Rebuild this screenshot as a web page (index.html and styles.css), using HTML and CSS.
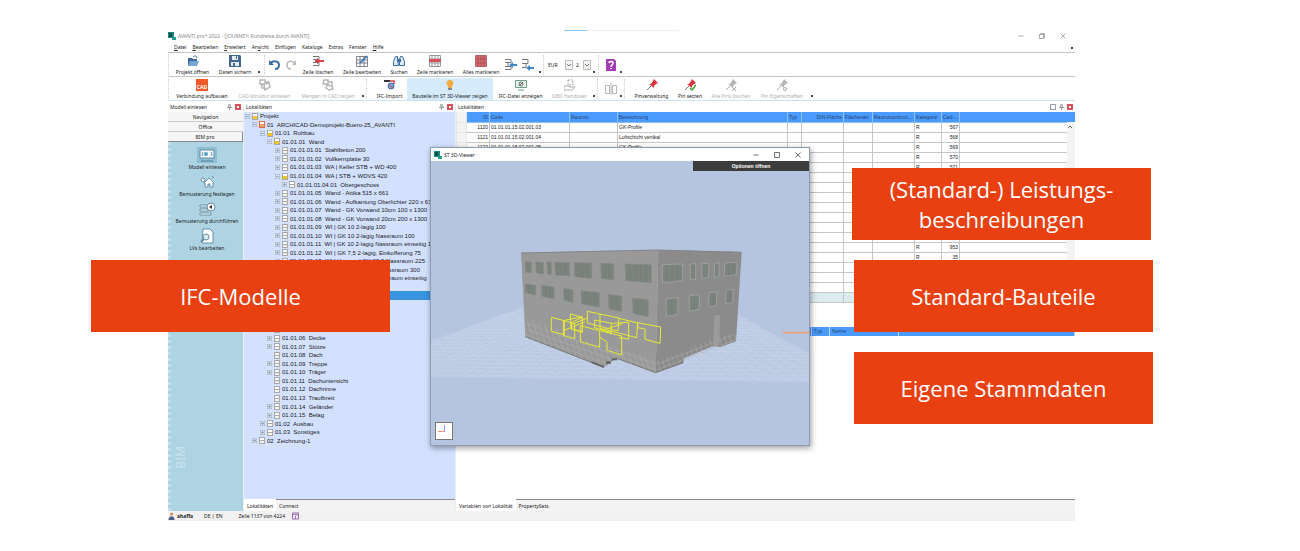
FILE: index.html
```html
<!DOCTYPE html>
<html lang="de">
<head>
  <meta charset="UTF-8">
  <meta name="viewport" content="width=device-width, initial-scale=1.0">
  <title>AVANTI pro+ 2022</title>
  <link rel="stylesheet" href="styles.css">
</head>
<body>
  <main class="stage">
    <div class="load-bar"></div>
    <div class="app">
      <header class="title-bar">
        <svg class="logo" viewBox="0 0 8 8"><path fill="#16897b" d="M0 0h6v6H0z"/><path fill="#0c4f4c" d="M1 1h3v4H1z"/><path fill="#22a08f" d="M4 5h4v3H4z"/></svg>
        <span>AVANTI pro+ 2022 - [JOURNEY: Rundreise durch AVANTI]</span>
        <div class="window-buttons">
          <button aria-label="Minimieren"><svg viewBox="0 0 6 6"><path d="M.5 3h5"/></svg></button>
          <button aria-label="Wiederherstellen"><svg viewBox="0 0 6 6"><path d="M.5 1.500h4v4h-4zM1.500 1.500v-1h4v4h-1"/></svg></button>
          <button aria-label="Schließen"><svg viewBox="0 0 6 6"><path d="M.5.5l5 5M5.500.5l-5 5"/></svg></button>
        </div>
      </header>
      <nav class="menu">
        <button><u>D</u>atei</button>
        <button><u>B</u>earbeiten</button>
        <button><u>E</u>rweitert</button>
        <button>An<u>s</u>icht</button>
        <button>Einfügen</button>
        <button>Kataloge</button>
        <button>Extras</button>
        <button>Fenster</button>
        <button><u>H</u>ilfe</button>
        <i class="more"></i>
      </nav>

      <div class="toolbar toolbar-main">
        <i class="grip"></i>
        <button class="tool"><svg viewBox="0 0 12 12"><path fill="#3e6b9d" d="M1 3h4l1 1h4v7H1z"/><path fill="#76a6d3" d="M3 6h9l-2 5H1z"/><path fill="none" stroke="#3e6b9d" d="M6 2c2-2 4-1 4 1"/></svg>Projekt öffnen</button>
        <button class="tool"><svg viewBox="0 0 12 12"><path fill="#45688f" d="M0 0h11l1 1v11H0z"/><path fill="#e4edf6" d="M3 1h6v4H3zM2 7h8v4H2z"/><path fill="#45688f" d="M7 1h1v3H7zM4 8h2v3H4z"/></svg>Daten sichern</button>
        <i class="more"></i>
        <i class="sep"></i>
        <button class="tool tool-only" aria-label="Rückgängig"><svg viewBox="0 0 12 12"><path fill="none" stroke="#3f6da3" stroke-width="2" d="M1 4c4-3 9-2 9 2 0 3-2 4-4 4"/><path fill="#3f6da3" d="M0 1v5h5z"/></svg></button>
        <button class="tool tool-only" aria-label="Wiederholen"><svg viewBox="0 0 12 12"><path fill="none" stroke="#b7b9bb" stroke-width="1.500" d="M10 4C6 1 2 2 2 6c0 3 2 4 4 4"/><path fill="#b7b9bb" d="M11 1v5H7z"/></svg></button>
        <button class="tool"><svg viewBox="0 0 12 12"><path fill="none" stroke="#777" d="M1 1.500h6v3H1M1 7.500h6v3H1"/><path stroke="#d8414b" stroke-width="2" d="M3 6h9"/><path fill="#d8414b" d="M5 3l4 3-4 3z"/></svg>Zeile löschen</button>
        <button class="tool"><svg viewBox="0 0 12 12"><path fill="#fff" stroke="#667" stroke-width=".8" d="M.5 1.500h11v10H.5zM.5 5h11M.5 8h11M4 1v10M8 1v10"/><path stroke="#4585b5" stroke-width="2" d="M4 8l7-7"/></svg>Zeile bearbeiten</button>
        <button class="tool"><svg viewBox="0 0 12 12"><path fill="#dcebfa" stroke="#3d6eaa" d="M2.500 1.500h2v3l1 6h-5v-4zM7.500 1.500h2l2 5v4h-5v-6z"/><path fill="#3d6eaa" d="M4 4h4v3H4z"/></svg>Suchen</button>
        <button class="tool"><svg viewBox="0 0 12 12"><path fill="#fff" stroke="#777" stroke-width=".7" d="M.5.5h11v11H.5zM.5 4h11M.5 8h11M3 0v12M6 0v12M9 0v12"/><path fill="#d8515a" d="M0 4h12v3H0z"/></svg>Zeile markieren</button>
        <button class="tool"><svg viewBox="0 0 12 12"><path fill="#dd6a72" stroke="#9a4a50" stroke-width=".7" d="M.5.5h11v11H.5zM.5 4h11M.5 8h11M3 0v12M6 0v12M9 0v12"/></svg>Alles markieren</button>
        <button class="tool tool-only" aria-label="Einrücken"><svg viewBox="0 0 12 12"><path fill="none" stroke="#777" d="M0 .5h6v3H0M0 7.500h6v3H0M3 3v5"/><path fill="#3d87c5" d="M4 6l4-3v2h4v2H8v2z"/></svg></button>
        <button class="tool tool-only" aria-label="Ausrücken"><svg viewBox="0 0 12 12"><path fill="none" stroke="#777" d="M0 .5h6v4H0M0 8.500h4v-4"/><path fill="#3d87c5" d="M4 9l4-3v2h4v2H8v2z"/></svg></button>
        <i class="more"></i>
        <i class="sep"></i>
        <select class="pick pick-wide" aria-label="Währung"><option>EUR</option></select>
        <select class="pick" aria-label="Nachkommastellen"><option>2</option></select>
        <i class="more"></i>
        <i class="sep"></i>
        <button class="tool tool-only" aria-label="Hilfe"><svg viewBox="0 0 12 12"><path fill="#a33fb5" d="M1 0h8l2 2v10H1z"/><path fill="none" stroke="#fff" stroke-width="1.500" d="M4 4c0-2 4-2 4 0S6 6 6 8M6 9v1"/></svg></button>
        <i class="more"></i>
      </div>

      <div class="toolbar toolbar-cad">
        <i class="grip"></i>
        <button class="tool"><svg viewBox="0 0 12 12"><path fill="#f05a28" d="M0 0h12v12H0z"/><text x="6" y="10" font-size="5" font-weight="bold" text-anchor="middle" fill="#fff">CAD</text></svg>Verbindung aufbauen</button>
        <button class="tool" disabled><svg viewBox="0 0 12 12"><path fill="none" stroke="#b5b5b5" stroke-width="1.500" d="M1 1h5v4H1zM5 5l5-1 1 4-5 3zM3 5v4h3M7 3h3"/></svg>CAD-Struktur einlesen</button>
        <button class="tool" disabled><svg viewBox="0 0 12 12"><path fill="none" stroke="#b5b5b5" stroke-width="1.500" d="M2 1h4v4H1zM6 3h4v3M5 6l5 1 1 3-4 1-3-2z"/></svg>Mengen in CAD zeigen</button>
        <i class="more"></i>
        <i class="sep"></i>
        <button class="tool"><svg viewBox="0 0 12 12"><path fill="#333" d="M0 1h6v2H0z"/><path fill="none" stroke="#d5444d" stroke-width="1.500" d="M6 2h4v3"/><circle cx="7" cy="7" r="3" fill="#77a9e0" stroke="#41609f"/><path stroke="#d5444d" d="M5 6l4 3"/></svg>IFC-Import</button>
        <button class="tool tool-on"><svg viewBox="0 0 12 12"><path fill="#f7a944" d="M6 1c4 0 4 4 2 6v2H4V7C2 5 2 1 6 1z"/><path fill="#888" d="M4 9h4v2H4z"/></svg>Bauteile im ST 3D-Viewer zeigen</button>
        <button class="tool"><svg viewBox="0 0 12 12"><path fill="#eef6f2" stroke="#6aa18b" d="M.5 1.500h11v7H.5zM3 11h6"/><circle cx="6" cy="5" r="2" fill="none" stroke="#666"/><path stroke="#666" d="M4 7l4-4"/></svg>IFC-Datei anzeigen</button>
        <button class="tool" disabled><svg viewBox="0 0 12 12"><path fill="none" stroke="#aaa" stroke-dasharray="2 1" d="M4 1h5v5H4z"/><path fill="none" stroke="#aaa" d="M0 7h4l2 1h5l-3 3H0z"/></svg>DBD Handover</button>
        <i class="more"></i>
        <i class="sep"></i>
        <button class="tool tool-only" disabled aria-label="Vergleichen"><svg viewBox="0 0 12 12"><path fill="none" stroke="#b5b5b5" d="M.5 2.500h4v8h-4zM7.500 2.500h4v8h-4zM6 0v12"/></svg></button>
        <i class="more"></i>
        <i class="sep"></i>
        <button class="tool"><svg viewBox="0 0 12 12"><path stroke="#777" d="M1 11l4-4"/><path fill="#d9343d" d="M8 0l4 4-2 1-2 2v2L3 5h2l2-3z"/></svg>Pinverwaltung</button>
        <button class="tool"><svg viewBox="0 0 12 12"><path stroke="#777" d="M1 11l4-4"/><path fill="#d9343d" d="M8 0l4 4-2 1-2 2v2L3 5h2l2-3z"/><path fill="none" stroke="#45a33b" stroke-width="1.500" d="M6 9l2 2 4-5"/></svg>Pin setzen</button>
        <button class="tool" disabled><svg viewBox="0 0 12 12"><path stroke="#aaa" d="M1 11l4-4M7 8l4 4M11 8l-4 4"/><path fill="#b5b5b5" d="M8 0l4 4-2 1-2 2v2L3 5h2l2-3z"/></svg>Alle Pins löschen</button>
        <button class="tool" disabled><svg viewBox="0 0 12 12"><path stroke="#aaa" d="M1 11l4-4"/><path fill="#b5b5b5" d="M8 0l4 4-2 1-2 2v2L3 5h2l2-3z"/><circle cx="9" cy="10" r="1.500" fill="none" stroke="#aaa"/></svg>Pin Eigenschaften</button>
        <i class="more"></i>
      </div>

      <div class="panels">
        <aside class="panel side-panel">
          <h2 class="panel-head">Modell einlesen<i class="pin"></i><button class="close" aria-label="Schließen"></button></h2>
          <button class="side-tab">Navigation</button>
          <button class="side-tab">Office</button>
          <button class="side-tab side-tab-on">BIM pro</button>
          <div class="side-body">
            <button class="side-item"><svg class="side-on" viewBox="0 0 20 16"><path fill="#f2f8fb" stroke="#6790a5" d="M3 3h14v8H3z"/><path fill="none" stroke="#47728a" stroke-width=".8" d="M6 5l-1 2 1 2M14 5l1 2-1 2M4 14h12"/><circle cx="9" cy="7" r="2" fill="#58a0c4"/></svg>Modell einlesen</button>
            <button class="side-item"><svg viewBox="0 0 20 16"><circle cx="6" cy="6" r="2" fill="#fff" stroke="#6790a5"/><path fill="#fff" stroke="#6790a5" d="M7 9l5-5 5 5h-1v4h-3v-3h-2v3H8V9zM15 2l2 2"/></svg>Bemusterung festlegen</button>
            <button class="side-item"><svg viewBox="0 0 20 16"><path fill="#fff" stroke="#6790a5" d="M3 4h8v2H3zM3 8h8v2H3zM3 12h11v2H3z"/><circle cx="14" cy="6" r="4" fill="#fff" stroke="#6790a5"/><path fill="#333" d="M15 4v4l-3-2z"/></svg>Bemusterung durchführen</button>
            <button class="side-item"><svg viewBox="0 0 20 16"><path fill="#fff" stroke="#6790a5" d="M6 1h7l3 3v11H5z"/><circle cx="9" cy="9" r="3" fill="#d7ebf4" stroke="#6790a5"/><path stroke="#6790a5" stroke-width="2" d="M7 11l-3 3"/></svg>LVs bearbeiten</button>
            <span class="side-brand">BIM</span>
          </div>
        </aside>

        <section class="panel tree-panel">
          <h2 class="panel-head">Lokalitäten<i class="pin"></i><button class="close" aria-label="Schließen"></button></h2>
          <ul class="tree" id="tree"></ul>
          <div class="tabs"><button class="tab tab-on">Lokalitäten</button><button class="tab">Connect</button></div>
        </section>

        <section class="panel grid-panel">
          <h2 class="panel-head">Lokalitäten<i class="dock"></i><i class="pin"></i><button class="close" aria-label="Schließen"></button></h2>
          <div class="grid-body">
            <table class="grid">
              <colgroup>
                <col class="c-mark"><col class="c-id"><col class="c-code"><col class="c-room"><col class="c-name"><col class="c-type"><col class="c-din"><col class="c-area"><col class="c-map"><col class="c-cat"><col class="c-cad"><col>
              </colgroup>
              <thead>
                <tr><td class="mark"></td><th class="num">ID</th><th>Code</th><th>Raumnr.</th><th>Bezeichnung</th><th>Typ</th><th class="num">DIN-Fläche</th><th>Flächenart</th><th>Raumzuordnun...</th><th>Kategorie</th><th>Cad-...</th><th></th></tr>
              </thead>
              <tbody id="rows"></tbody>
            </table>
            <div class="scroll"><svg viewBox="0 0 6 6"><path d="M1 4l2-2 2 2"/></svg></div>
          </div>
          <div class="detail-head"><span class="d-mark"></span><span class="d-type">Typ</span><span class="d-name">Name</span><span class="d-rest"></span></div>
          <div class="detail-body"></div>
          <div class="tabs"><button class="tab tab-on">Variablen von Lokalität</button><button class="tab">PropertySets</button></div>
        </section>
      </div>

      <footer class="status">
        <svg viewBox="0 0 6 8"><circle cx="3" cy="2" r="1.500" fill="#d58b4a"/><path fill="#4b5d86" d="M0 8c0-5 6-5 6 0z"/></svg>
        <b>ahaffa</b>
        <span>DE | EN</span>
        <span>Zeile 1137 von 4224</span>
        <svg viewBox="0 0 8 8"><path fill="#f7edfb" stroke="#8b5aa5" d="M.5.5h7v7h-7zM.5 2.500h7M4 4v3"/></svg>
      </footer>

      <section class="viewer">
        <header class="viewer-bar">
          <svg class="logo" viewBox="0 0 8 8"><path fill="#16897b" d="M0 0h6v6H0z"/><path fill="#0c4f4c" d="M1 1h3v4H1z"/><path fill="#22a08f" d="M4 5h4v3H4z"/></svg>
          <span>ST 3D-Viewer</span>
          <div class="window-buttons">
            <button aria-label="Minimieren"><svg viewBox="0 0 6 6"><path d="M.5 3h5"/></svg></button>
            <button aria-label="Maximieren"><svg viewBox="0 0 6 6"><path d="M.5.5h5v5h-5z"/></svg></button>
            <button aria-label="Schließen"><svg viewBox="0 0 6 6"><path d="M.5.5l5 5M5.500.5l-5 5"/></svg></button>
          </div>
        </header>
        <div class="scene">
          <svg class="model" viewBox="-207 -207 1134 852" preserveAspectRatio="xMidYMid slice">
            <defs>
              <clipPath id="floor"><path d="M-207 332L70 230 400 180 720 258 927 370V456L-207 442z"/></clipPath>
              <clipPath id="base"><path d="M74 265L300 345 390 366 470 390 550 366 640 322 710 312 708 334 650 352 552 396 467 428 350 385 312 412 76 320z"/></clipPath>
            </defs>
            <g clip-path="url(#floor)">
              <path fill="#bccae3" d="M-207 180h1134v280H-207z"/>
              <g id="floor-lines" class="floor-lines"></g>
            </g>
            <path fill="#999" d="M63 68L475 60 467 428 350 385 312 412 76 320z"/>
            <path fill="#8b8b8b" d="M475 60L725 66 708 334 660 352 640 348 552 385 550 398 467 428z"/>
            <path fill="none" stroke="#858585" stroke-width="3" d="M63 69L475 60 725 67"/>
            <path fill="none" stroke="#777" stroke-width="3" d="M76 320L312 412M350 385L467 428 550 398"/>
            <g clip-path="url(#base)"><g id="base-lines" class="base-lines"></g></g>
            <path fill="#666" d="M275 394l37 14v6l-37-14zM318 394h14v8h-14zM335 385h16v6h-16z"/>
            <g class="panes">
              <path d="M75 95l19 1v33l-18-2zM107 96l23 1 1 35-22-3zM140 96l14 1 1 37-12-2zM164 97l44 1 1 40-42-3zM222 98l53 1v46l-51-5zM302 100l39 1v49l-37-4zM375 102l79 2v54l-77-6z"/>
              <path d="M76 161l31 5v29l-31-7zM124 166l38 5 1 36-37-8zM191 175l28 4v38l-27-7zM243 182l55 6v43l-53-9zM325 194l40 4v47l-38-8zM397 204l48 5v51l-46-10z"/>
            </g>
            <g class="panes panes-lit">
              <path d="M487 104l61-2v50l-61 6zM571 102l16-1v47l-16 2zM606 101l21-1-2 43-19 3zM644 100l14-1-1 41-14 2zM674 99l37-2-1 37-37 5z"/>
              <path d="M498 207l36-4-1 50-34 6zM568 197l31-3-2 44-29 6zM627 188l24-2-2 41-23 4zM678 180l22-2-2 39-20 4z"/>
            </g>
            <g class="pane-bars">
              <path d="M172 98v38M184 98v38M196 98v38M234 99v42M248 99v43M262 99v44M314 101v46M328 101v47M390 103v50M406 103v51M422 103v52M438 104v52M88 163v27M138 168v33M150 170v34M205 177v36M258 184v40M272 186v40M285 187v40M338 196v43M352 197v45M412 206v47M428 207v48M502 104v52M517 103v52M532 103v51M516 206v50M584 196v44M640 188v40M690 180v38M686 99v38M699 98v38"/>
            </g>
            <path fill="#9b9b9b" d="M643 257l17-3-2 92-18 4z"/>
            <path class="selection" d="M154 262l39 10v42l-39-10zM190 272l57-12v45l-33-9v-18l33-16M190 272l34 9v45l-34-10zM211 252l36 10v45l-34-10zM214 284l48-20M262 244l95 20-3 39-92-24zM300 252v43l55 14M284 270l50 10v28l-50-15zM241 287l58 15v50l-58-17zM334 280l52-3v50l-30-4M357 265l56 14-3 44-54-14M413 278l69 13-2 49-45-12V297l-22-4zM299 302l66 16v57l-44-14v-24l-22-16M307 301l60-20M195 300l60-25"/>
            <path fill="none" stroke="#f39a72" stroke-width="5" d="M849 308h78"/>
          </svg>
          <button class="options">Optionen öffnen</button>
          <div class="axes"><svg viewBox="0 0 16 16"><path stroke="#8a9cf4" d="M8.500 2v7"/><path stroke="#f08d7c" d="M2 8.500h6"/></svg></div>
        </div>
      </section>
    </div>

    <div class="callout callout-model">IFC-Modelle</div>
    <div class="callout callout-spec">(Standard-) Leistungs-<br>beschreibungen</div>
    <div class="callout callout-parts">Standard-Bauteile</div>
    <div class="callout callout-own">Eigene Stammdaten</div>
  </main>

  <script>
    // [level, expander, folder colour, text]
    const nodes = [
      [0, "-", "y", "Projekt"],
      [1, "-", "r", "01  ARCHICAD-Demoprojekt-Buero-25_AVANTI"],
      [2, "-", "y", "01.01  Rohbau"],
      [3, "-", "y", "01.01.01  Wand"],
      [4, "+", "", "01.01.01.01  Stahlbeton 200"],
      [4, "+", "", "01.01.01.02  Vollkernplatte 30"],
      [4, "+", "", "01.01.01.03  WA | Keller STB + WD 400"],
      [4, "-", "y", "01.01.01.04  WA | STB + WDVS 420"],
      [5, "+", "", "01.01.01.04.01  Obergeschoss"],
      [4, "+", "", "01.01.01.05  Wand - Attika 515 x 661"],
      [4, "+", "", "01.01.01.06  Wand - Aufkantung Oberlichter 220 x 639"],
      [4, "+", "", "01.01.01.07  Wand - GK Vorwand 10cm 100 x 1300"],
      [4, "+", "", "01.01.01.08  Wand - GK Vorwand 20cm 200 x 1300"],
      [4, "+", "", "01.01.01.09  WI | GK 10 2-lagig 100"],
      [4, "+", "", "01.01.01.10  WI | GK 10 2-lagig Nassraum 100"],
      [4, "+", "", "01.01.01.11  WI | GK 10 2-lagig Nassraum einseitig 100"],
      [4, "+", "", "01.01.01.12  WI | GK 7,5 2-lagig, Einkofferung 75"],
      [4, "+", "", "01.01.01.13  WI | Vorwand GK 22,5 Nassraum 225"],
      [4, "+", "", "01.01.01.14  WI | Vorwand GK 30 Nassraum 300"],
      [4, "+", "", "01.01.01.15  WI | GK 15 2-lagig Nassraum einseitig"],
      [4, "+", "", ""],
      [4, "", "sel", ""],
      [3, "+", "", ""],
      [3, "+", "", ""],
      [3, "+", "", ""],
      [3, "+", "", ""],
      [3, "+", "", "01.01.06  Decke"],
      [3, "+", "", "01.01.07  Stütze"],
      [3, "", "", "01.01.08  Dach"],
      [3, "+", "", "01.01.09  Treppe"],
      [3, "+", "", "01.01.10  Träger"],
      [3, "", "", "01.01.11  Dachuntersicht"],
      [3, "", "", "01.01.12  Dachrinne"],
      [3, "", "", "01.01.13  Traufbrett"],
      [3, "+", "", "01.01.14  Geländer"],
      [3, "+", "", "01.01.15  Belag"],
      [2, "+", "", "01.02  Ausbau"],
      [2, "+", "", "01.03  Sonstiges"],
      [1, "+", "", "02  Zeichnung-1"]
    ];
    document.getElementById("tree").innerHTML = nodes.map(([level, mark, kind, text]) =>
      `<li class="node level-${level} ${kind === "sel" ? "node-selected" : ""}">` +
      (mark ? `<button class="expander" aria-label="Knoten">${mark === "+" ? '<svg viewBox="0 0 5 5"><path d="M0 0h5v5H0zM1 2.500h3M2.500 1v3"/></svg>' : '<svg viewBox="0 0 5 5"><path d="M0 0h5v5H0zM1 2.500h3"/></svg>'}</button>` : '<i class="expander"></i>') +
      `<i class="folder folder-${kind}"></i><span>${text}</span></li>`
    ).join("");

    // first columns and the CAD number of each row
    const rows = [
      ["1120", "01.01.01.15.02.001.03", "GK-Profile", "567"],
      ["1121", "01.01.01.15.02.001.04", "Luftschicht vertikal", "568"],
      ["1122", "01.01.01.15.02.001.05", "GK-Profile", "569"],
      ["", "", "", "570"], ["", "", "", "571"], ["", "", "", ""], ["", "", "", ""],
      ["", "", "", ""], ["", "", "", ""], ["", "", "", ""], ["", "", "", ""],
      ["", "", "", ""], ["", "", "", "953"], ["", "", "", "35"],
      ["", "", "", ""], ["", "", "", ""], ["", "", "", ""], ["", "", "", ""]
    ];
    document.getElementById("rows").innerHTML = rows.map(([id, code, name, cad], i) =>
      `<tr class="${i === 17 ? "row-on" : ""}"><td class="mark"></td><td class="num">${id}</td><td>${code}</td><td></td><td>${name}</td><td></td><td></td><td></td><td></td><td>${cad ? "R" : ""}</td><td class="num">${cad}</td><td></td></tr>`
    ).join("");

    // perspective floor grid, two fans of lines
    let floor = "";
    for (let i = 0; i < 60; i++) {
      floor += `<path d="M${-900 + i * 32} 460L${-100 + i * 22} 180"/>`;
      floor += `<path d="M${-420 + i * 34} 180L${-220 + i * 46} 460"/>`;
    }
    for (let y = 250, step = 7; y < 460; y += step, step += 0.3) {
      floor += `<path d="M-207 ${y}L927 ${y + 14}"/>`;
    }
    document.getElementById("floor-lines").innerHTML = floor;

    let base = "";
    for (let i = 0; i < 45; i++) {
      base += `<path d="M${40 + i * 16} 240l60 190"/>`;
      if (i < 9) base += `<path d="M60 ${240 + i * 17}l410 146 250-96"/>`;
    }
    document.getElementById("base-lines").innerHTML = base;
  </script>
</body>
</html>
```
FILE: styles.css
```css
* {
  box-sizing: border-box;
}
body {
  margin: 0;
  padding: 29px 147px 29px 91px;
  background: #fff;
  font-family: "Noto Sans", "Open Sans", sans-serif;
  font-size: 5px;
  line-height: 8px;
  color: #222;
}
button, select {
  margin: 0;
  padding: 0;
  border: 0;
  background: none;
  font: inherit;
  color: inherit;
  white-space: nowrap;
}
svg {
  display: block;
  flex: none;
}
.stage {
  position: relative;
}
.load-bar {
  position: absolute;
  top: 1px;
  left: 473px;
  width: 115px;
  height: 1px;
  background: linear-gradient(90deg, #8cc4f5 23px, #eee 23px);
}
.app {
  position: relative;
  margin: 0 78px 0 77px;
}

/* title bar and menu */
.title-bar {
  display: flex;
  align-items: center;
  height: 13px;
  gap: 2px;
  color: #888;
}
.logo {
  width: 8px;
  height: 8px;
}
.window-buttons {
  display: flex;
  gap: 15px;
  margin-left: auto;
  padding-right: 9px;
}
.window-buttons svg {
  width: 6px;
  height: 6px;
  fill: none;
  stroke: #888;
  stroke-width: .7;
}
.menu {
  display: flex;
  align-items: center;
  gap: 6px;
  height: 10px;
  padding-left: 6px;
}
.menu .more {
  margin-left: auto;
}
.more {
  align-self: end;
  width: 2px;
  height: 2px;
  margin: 0 2px 3px;
  background: #444;
}

/* toolbars */
.toolbar {
  display: grid;
  height: 24px;
  border-top: 1px solid #c4c4c4;
  align-items: center;
}
.toolbar-main {
  grid-template-columns: 3px 43px 42px 8px 3px 16px 16px 38px 50px 24px 48px 44px 16px 18px 6px 5px 26px 17px 7px 5px 15px 6px;
}
.toolbar-cad {
  grid-template-columns: 3px 62px 63px 64px 6px 6px 35px 86px 55px 43px 6px 6px 15px 6px 6px 43px 34px 48px 54px 6px;
}
.grip, .sep {
  height: 20px;
  border-left: 1px dotted #ccc;
}
.tool {
  display: flex;
  flex-direction: column;
  align-items: center;
  justify-content: space-between;
  height: 22px;
  padding-top: 1px;
}
.tool svg {
  width: 12px;
  height: 12px;
}
.tool-only {
  justify-content: center;
}
.tool:disabled {
  color: #b0b0b0;
}
.tool-on {
  background: #d5eafb;
}
.pick {
  appearance: none;
  height: 10px;
  background: url("data:image/svg+xml,%3Csvg xmlns='http://www.w3.org/2000/svg' viewBox='0 0 8 10'%3E%3Cpath fill='%23f3f3f3' stroke='%23bbb' d='M.5.5h7v9h-7z'/%3E%3Cpath fill='none' stroke='%23777' d='M2 4l2 2 2-2'/%3E%3C/svg%3E") right center / 8px 10px no-repeat;
}
.pick-wide {
  margin-right: 1px;
}
.pick:not(.pick-wide) {
  margin-left: 2px;
}

/* panels */
.panels {
  display: grid;
  grid-template-columns: 75px 211px 1fr;
  gap: 1px;
  height: 411px;
  border-top: 1px solid #cde3f2;
  background: #e4f0f8;
}
.panel {
  display: flex;
  flex-direction: column;
  min-width: 0;
  min-height: 0;
}
.panel-head {
  display: flex;
  align-items: center;
  gap: 3px;
  height: 11px;
  margin: 0;
  padding: 0 2px;
  background: #fff;
  font-size: 5px;
  font-weight: normal;
}
.pin {
  width: 5px;
  height: 6px;
  margin-left: auto;
  background:
    linear-gradient(#999, #999) center 3px / 5px 1px no-repeat,
    linear-gradient(#bbb, #bbb) center top / 3px 3px no-repeat,
    linear-gradient(#999, #999) center bottom / 1px 3px no-repeat;
}
.dock {
  width: 6px;
  height: 6px;
  margin-left: auto;
  border: 1px solid #9aa0ad;
}
.dock + .pin {
  margin-left: 0;
}
.close {
  width: 6px;
  height: 6px;
  border: 2px solid #d5515b;
  background: #fff;
}
.side-tab {
  height: 10px;
  border-bottom: 1px solid #ccc;
  background: #f5f5f5;
}
.side-tab-on {
  border-right: 1px solid #888;
  border-bottom: 1px solid #888;
}
.side-body {
  flex: 1;
  display: flex;
  flex-direction: column;
  background: #aed4e4;
  border-left: 3px dotted #c3e0ec;
  padding-top: 5px;
}
.side-item {
  display: flex;
  flex-direction: column;
  align-items: center;
  height: 27px;
}
.side-item svg {
  width: 20px;
  height: 16px;
}
.side-on {
  background: #8fbdd2;
}
.side-brand {
  margin: auto 0 42px 4px;
  writing-mode: vertical-rl;
  transform: rotate(180deg);
  align-self: flex-start;
  font-size: 12px;
  line-height: 12px;
  color: #c9e3ee;
}

/* tree */
.tree {
  flex: 1;
  display: grid;
  grid-auto-rows: 1fr;
  min-height: 0;
  margin: 0;
  padding: 0 0 54px;
  overflow: hidden;
  list-style: none;
  background: #d3e1ff;
  font-family: "Liberation Sans", Arial, sans-serif;
  font-size: 6px;
}
.node {
  display: flex;
  align-items: center;
  gap: 2px;
  min-height: 0;
  white-space: pre;
}
.level-0 { padding-left: 1px; }
.level-1 { padding-left: 8px; }
.level-2 { padding-left: 16px; }
.level-3 { padding-left: 23px; }
.level-4 { padding-left: 31px; }
.level-5 { padding-left: 38px; }
.node-selected {
  background: #3994e0;
}
.expander {
  flex: none;
  width: 5px;
  height: 5px;
}
.expander svg {
  width: 5px;
  height: 5px;
  fill: none;
  stroke: #888;
  stroke-width: .6;
}
.folder {
  flex: none;
  width: 6px;
  height: 7px;
  border: 1px solid #aaa;
  background: linear-gradient(#fff 2px, #aaa 2px, #aaa 3px, #f4f4ee 3px);
}
.folder-y {
  background: linear-gradient(#fff 2px, #f0c41c 2px);
}
.folder-r {
  border-color: #e06a55;
  background: linear-gradient(#fff 2px, #f3a35e 2px);
}
.folder-sel {
  visibility: hidden;
}

/* tabs under a panel */
.tabs {
  display: flex;
  height: 12px;
  background: #f3f3f3;
}
.tab {
  padding: 0 3px;
  border-top: 1px solid #888;
}
.tab-on {
  border-top-color: #fff;
  background: #fff;
}
.tabs::after {
  content: "";
  flex: 1;
  border-top: 1px solid #888;
}

/* data grid */
.grid-body {
  display: flex;
  background: #fff;
  font-family: "Liberation Sans", Arial, sans-serif;
}
.grid {
  flex: 1;
  width: 100%;
  table-layout: fixed;
  border-collapse: collapse;
}
.grid th, .grid td {
  height: 10px;
  padding: 0 1px;
  border: 1px solid #c6c6c6;
  border-top: 0;
  overflow: hidden;
  white-space: nowrap;
  text-align: left;
  font-weight: normal;
}
.grid th {
  background: #4b9bff;
  border-color: #8dbffb;
  color: #24446d;
}
.grid th:last-child, .grid td:last-child {
  border-right: 0;
}
.grid .num {
  text-align: right;
}
.grid .mark {
  background: #f3f3f3;
  border-color: #e6e6e6;
}
.grid .row-on td {
  background: #dcebf0;
}
.c-mark { width: 10px; }
.c-id { width: 23px; }
.c-code { width: 80px; }
.c-room { width: 48px; }
.c-name { width: 170px; }
.c-type { width: 14px; }
.c-din { width: 42px; }
.c-area { width: 29px; }
.c-map { width: 42px; }
.c-cat { width: 27px; }
.c-cad { width: 18px; }
.scroll {
  width: 8px;
  padding-top: 12px;
  background: linear-gradient(#4b9bff 10px, #f3f3f3 10px);
}
.scroll svg {
  width: 6px;
  height: 6px;
  fill: none;
  stroke: #666;
}
.detail-head {
  display: flex;
  height: 9px;
  margin-top: 24px;
  background: #4b9bff;
  color: #24446d;
}
.detail-head span {
  border-right: 1px solid #b5d6ff;
  padding-left: 2px;
}
.d-mark { width: 356px; }
.d-type { width: 18px; }
.d-name { width: 69px; }
.d-rest { flex: 1; }
.detail-body {
  flex: 1;
  background: #fff;
}
.grid-panel {
  background: #fff;
}

/* status bar */
.status {
  display: flex;
  align-items: center;
  gap: 2px;
  height: 10px;
  background: #f1f1f1;
}
.status span {
  padding: 0 5px 0 9px;
}
.status svg {
  width: 7px;
  height: 8px;
}

/* 3D viewer window */
.viewer {
  position: absolute;
  top: 118px;
  left: 262px;
  width: 380px;
  border: 1px solid #8e9bb0;
  box-shadow: 1px 2px 6px rgba(0, 0, 0, .4);
}
.viewer-bar {
  display: flex;
  align-items: center;
  gap: 2px;
  height: 13px;
  padding-left: 3px;
  background: #fff;
}
.viewer-bar .window-buttons {
  padding-right: 8px;
}
.viewer-bar .window-buttons svg {
  stroke: #333;
}
.scene {
  position: relative;
  background: #b6c5df;
}
.model {
  width: 100%;
  height: 284px;
}
.options {
  position: absolute;
  top: 0;
  right: 0;
  width: 116px;
  height: 10px;
  background: #3c3c3c;
  color: #fff;
  font-family: "Liberation Sans", Arial, sans-serif;
  font-weight: bold;
}
.axes {
  position: absolute;
  bottom: 5px;
  left: 4px;
  padding: 0;
  border: 1px solid #777;
  background: #fff;
}
.axes svg {
  width: 16px;
  height: 16px;
}
.floor-lines {
  fill: none;
  stroke: #dae4f4;
  stroke-width: 1;
  opacity: .7;
}
.base-lines {
  fill: none;
  stroke: #b4b4b4;
  stroke-width: 2;
  opacity: .7;
}
.panes {
  fill: #7b837d;
  stroke: #858b86;
  stroke-width: 2;
}
.panes-lit {
  stroke: #aaa;
}
.pane-bars {
  fill: none;
  stroke: #6c756e;
  stroke-width: 1;
}
.selection {
  fill: none;
  stroke: #e9ea33;
  stroke-width: 3;
}

/* callouts */
.callout {
  position: absolute;
  display: flex;
  align-items: center;
  justify-content: center;
  width: 299px;
  height: 72px;
  background: #e84011;
  color: #fff;
  font-family: "Open Sans", "Noto Sans", sans-serif;
  font-size: 22px;
  line-height: 30px;
  text-align: center;
}
.callout-model {
  top: 231px;
  left: 0;
}
.callout-spec {
  top: 139px;
  right: 2px;
}
.callout-parts {
  top: 231px;
  right: 0;
}
.callout-own {
  top: 323px;
  right: 0;
}
```
